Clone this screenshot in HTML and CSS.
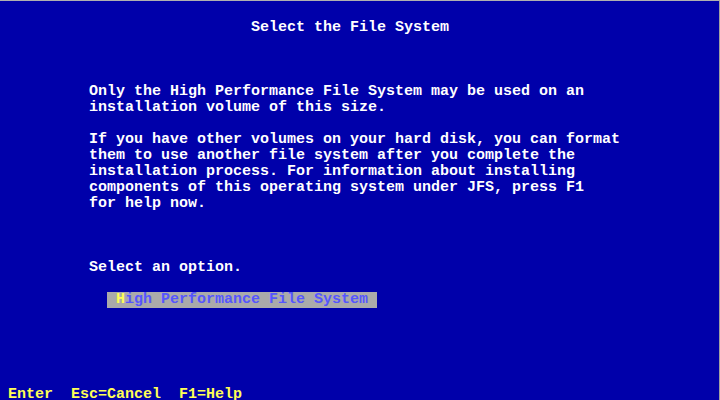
FILE: index.html
```html
<!DOCTYPE html>
<html>
<head>
<meta charset="utf-8">
<link rel="stylesheet" href="styles.css">
</head>
<body>
<div class="screen">
  <div class="text">
    <div class="row"></div>
    <div class="row">                            Select the File System</div>
    <div class="row"></div>
    <div class="row"></div>
    <div class="row"></div>
    <div class="row">          Only the High Performance File System may be used on an</div>
    <div class="row">          installation volume of this size.</div>
    <div class="row"></div>
    <div class="row">          If you have other volumes on your hard disk, you can format</div>
    <div class="row">          them to use another file system after you complete the</div>
    <div class="row">          installation process. For information about installing</div>
    <div class="row">          components of this operating system under JFS, press F1</div>
    <div class="row">          for help now.</div>
    <div class="row"></div>
    <div class="row"></div>
    <div class="row"></div>
    <div class="row">          Select an option.</div>
    <div class="row"></div>
    <div class="row">            <span class="sel"> <span class="hot">H</span>igh Performance File System </span></div>
    <div class="row"></div>
    <div class="row"></div>
    <div class="row"></div>
    <div class="row"></div>
    <div class="row"></div>
    <div class="row keys"> Enter  Esc=Cancel  F1=Help</div>
  </div>
</div>
</body>
</html>
```
FILE: styles.css
```css
html, body {
  margin: 0;
  padding: 0;
  background: #0000aa;
}
.screen {
  width: 720px;
  height: 400px;
  box-sizing: border-box;
  background: #0000aa;
  border-top: 1px solid #b0b0b0;
  border-right: 1px solid #a0a0a0;
  overflow: hidden;
}
.text {
  margin-top: 1px;
  margin-left: -1px;
  font-family: "Liberation Mono", "DejaVu Sans Mono", monospace;
  font-size: 15px;
  font-weight: bold;
  color: #ffffff;
}
.row {
  height: 16px;
  line-height: 16px;
  white-space: pre;
}
.row:first-child {
  height: 18px;
}
.sel {
  background: #aaaaaa;
  color: #5555ff;
  display: inline-block;
  height: 16px;
  line-height: 16px;
  vertical-align: top;
}
.hot {
  color: #ffff55;
}
.row.keys {
  color: #ffff55;
  height: 12px;
  line-height: 14px;
}
```
